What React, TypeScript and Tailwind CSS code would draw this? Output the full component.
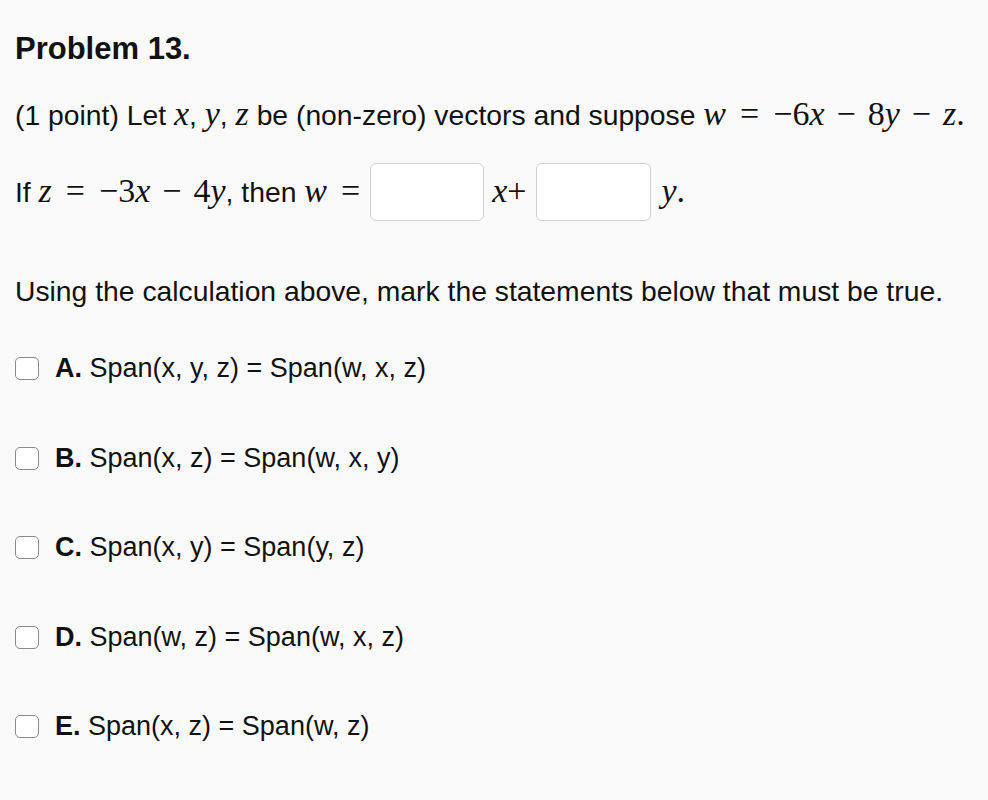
import React from "react";

const sans = "font-['Helvetica','Liberation_Sans',Arial,sans-serif]";
const serif = "font-['Liberation_Serif','Times_New_Roman',serif] text-[34px] leading-[34px]";

// italic variable
function V({ children }: { children: React.ReactNode }) {
  return <span className={`${serif} italic`}>{children}</span>;
}

// upright number
function N({ children }: { children: React.ReactNode }) {
  return <span className={serif}>{children}</span>;
}

// relation / binary operator with math spacing
function Op({ children, rel }: { children: React.ReactNode; rel?: boolean }) {
  return (
    <span className={`${serif} ${rel ? "mx-[14px]" : "mx-[12px]"}`}>{children}</span>
  );
}

const options = [
  { label: "A.", text: "Span(x, y, z) = Span(w, x, z)" },
  { label: "B.", text: "Span(x, z) = Span(w, x, y)" },
  { label: "C.", text: "Span(x, y) = Span(y, z)" },
  { label: "D.", text: "Span(w, z) = Span(w, x, z)" },
  { label: "E.", text: "Span(x, z) = Span(w, z)" },
];

export default function App() {
  return (
    <div className={`w-[988px] h-[800px] bg-[#fafafa] text-[#111] ${sans} pl-[15px] pt-[30px]`}>
      <h1 className="text-[31px] font-bold leading-[38px]">Problem 13.</h1>
      <p className="text-[28.3px] leading-[34px] mt-[29px] whitespace-nowrap">
        (1 point) Let <V>x</V>, <V>y</V>, <V>z</V> be (non-zero) vectors and suppose <V>w</V>
        <Op rel>=</Op>
        <N>−6</N>
        <V>x</V>
        <Op>−</Op>
        <N>8</N>
        <V>y</V>
        <Op>−</Op>
        <V>z</V>
        <N>.</N>
      </p>
      <div className="flex items-center text-[28.3px] mt-[31px] h-[58px] whitespace-nowrap">
        <span>
          If <V>z</V>
          <Op rel>=</Op>
          <N>−3</N>
          <V>x</V>
          <Op>−</Op>
          <N>4</N>
          <V>y</V>, then <V>w</V>
          <Op rel>=</Op>
        </span>
        <div className="w-[114px] h-[58px] -ml-[4px] bg-white border border-[#d0d0d0] rounded-[6px]" />
        <span className="ml-[8px] mr-[10px]">
          <V>x</V>
          <N>+</N>
        </span>
        <div className="w-[115px] h-[58px] bg-white border border-[#d0d0d0] rounded-[6px]" />
        <span className="ml-[10px]">
          <V>y</V>
          <N>.</N>
        </span>
      </div>
      <p className="text-[28.3px] leading-[34px] mt-[53px] whitespace-nowrap">
        Using the calculation above, mark the statements below that must be true.
      </p>
      <div className="flex flex-col gap-[56.5px] mt-[44px]">
        {options.map((o) => (
          <label key={o.label} className="flex items-center h-[33px] text-[27px]">
            <span className="w-[24px] h-[23px] rounded-[5px] border-[1.5px] border-[#8a8a8a] bg-white mr-[16px]" />
            <span>
              <b>{o.label}</b> {o.text}
            </span>
          </label>
        ))}
      </div>
    </div>
  );
}
